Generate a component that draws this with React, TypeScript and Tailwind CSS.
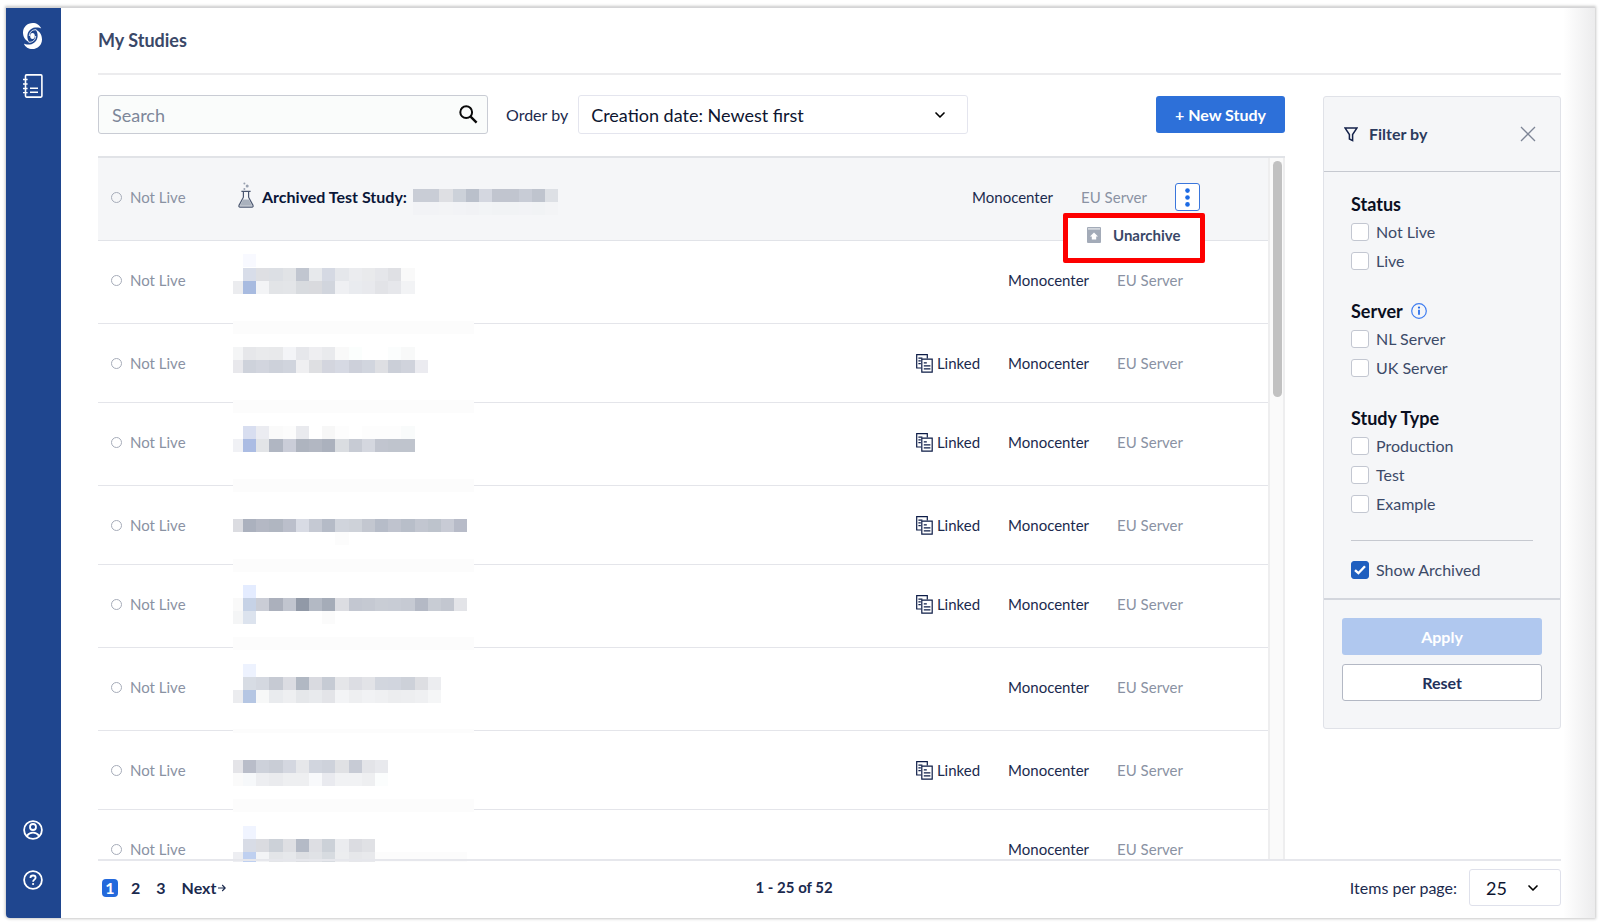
import { useState } from "react";
import { ChevronDown } from "lucide-react";

type Band = { y: number; col?: number; cells: string[] };

type Study = {
  id: number;
  tall?: boolean;
  linked?: boolean;
  // faint strip that sits across the divider above the name
  smear?: { y: number; h: number };
  bands: Band[];
};

const studies: Study[] = [
  {
    id: 2,
    tall: true,
    bands: [
      { y: 13, col: 1, cells: ["#f8f9ff"] },
      { y: 27, col: 1, cells: ["#d8dde9", "#dedfe3", "#dcdfe4", "#e1e3e6", "#c1c6d0", "#e7e9ec", "#d5d9e3", "#e5e7eb", "#ebecef", "#e9eaec", "#e5e6ea", "#dfe0e4", "#f9f9f9"] },
      { y: 40, cells: ["#ebecef", "#a8bbe0", "#f3f4f6", "#e2e4e7", "#e3e5e8", "#d8dbdf", "#d9dade", "#d1d5dd", "#eff0f3", "#e9ebef", "#e8e9ed", "#e2e3e7", "#e6e7eb", "#f2f3f5"] },
    ],
  },
  {
    id: 3,
    linked: true,
    smear: { y: -3, h: 13 },
    bands: [
      { y: 23, cells: ["#f4f5f6", "#e6e7ea", "#e9eaec", "#e8e9eb", "#f3f4f7", "#e6e7eb", "#eeeef1", "#e9eaed", "#f9f9f9", "#fbfefd", "#ffffff", "#ffffff", "#fbfdfd", "#f8f9f9"] },
      { y: 36, cells: ["#e8e8ec", "#ced2db", "#d2d5de", "#cdd1da", "#d0d4dd", "#efeff1", "#dedfe2", "#d3d5de", "#d6d9e3", "#cdd0da", "#d1d5de", "#dedfe3", "#cbcfd8", "#d0d3dc", "#ebebf0"] },
    ],
  },
  {
    id: 4,
    tall: true,
    linked: true,
    smear: { y: -3, h: 13 },
    bands: [
      { y: 23, col: 1, cells: ["#d8def0", "#ebecf1", "#fafafa", "#fcfcfc", "#e9eaee", "#ffffff", "#f7f7f7", "#fdfdfd", "#ffffff", "#fdfdfd", "#fdfdfd", "#fdfdfd", "#f9fbfb"] },
      { y: 36, cells: ["#f0f1f5", "#abbce3", "#e2e4e7", "#b0b6c2", "#cacdd8", "#aeb4bf", "#b2b7c2", "#abb1bd", "#dadde1", "#c7cbd4", "#d4d7df", "#c1c5cf", "#bfc4cd", "#bfc4cd"] },
    ],
  },
  {
    id: 5,
    linked: true,
    smear: { y: -7, h: 13 },
    bands: [
      { y: 33, cells: ["#dbdce1", "#abb1be", "#b4b8c4", "#b0b6c1", "#bbbfcb", "#d8dbe4", "#c5c9d3", "#b5bbc7", "#d0d4dc", "#ced2d9", "#c3c7d0", "#b6bcc8", "#bfc3ce", "#b8bec9", "#c2c6d0", "#bdc3cc", "#c8cbd5", "#b7bbc8"] },
      { y: 46, col: 8, cells: ["#fcfcfc"] },
    ],
  },
  {
    id: 6,
    tall: true,
    linked: true,
    smear: { y: -6, h: 13 },
    bands: [
      { y: 20, col: 1, cells: ["#e4ecff"] },
      { y: 33, cells: ["#f9f9f9", "#c6d2e6", "#cacdd6", "#abb0bc", "#c1c5cf", "#9199a7", "#b3b9c4", "#a5acb8", "#dcdde2", "#c3c7d1", "#c5c9d2", "#c9cdd5", "#c8ccd5", "#c6cad3", "#b4b9c5", "#c8ccd4", "#c3c7d0", "#e3e4e8"] },
      { y: 46, cells: ["#f4f5f6", "#dce3ee"] },
      { y: 46, col: 7, cells: ["#fbfbfb"] },
    ],
  },
  {
    id: 7,
    tall: true,
    smear: { y: -11, h: 13 },
    bands: [
      { y: 16, col: 1, cells: ["#edf2fe"] },
      { y: 29, col: 1, cells: ["#d7dce4", "#d4d8e0", "#c6cad3", "#dbdce2", "#b1b8c3", "#d9dae0", "#c6cbd4", "#e5e6e9", "#dcdde3", "#e2e3e7", "#d2d6de", "#d1d5de", "#cdd1d9", "#dddee2", "#ecedf0"] },
      { y: 42, cells: ["#ebecef", "#b5c6e3", "#f7f8f8", "#e9ebee", "#eeeff1", "#e5e7ea", "#e8eaed", "#e3e4e8", "#f3f4f6", "#eeeff1", "#f1f2f4", "#eff0f2", "#ecedef", "#edeef0", "#eff0f2", "#f5f6f7"] },
    ],
  },
  {
    id: 8,
    linked: true,
    smear: { y: -2, h: 4 },
    bands: [
      { y: 29, cells: ["#e4e4e8", "#b9bdc9", "#cdd1da", "#c9cdd6", "#d4d7e0", "#e6e7ea", "#d1d5de", "#ced2db", "#e0e1e4", "#c7cbd5", "#e3e4e8", "#e8e9ed"] },
      { y: 42, cells: ["#fafafa", "#f6f8fa", "#edeef1", "#eaebee", "#eeeff1", "#eeeff1", "#f8f9fb", "#e9eaef", "#f1f2f4", "#f1f2f4", "#eeeff1", "#fbfdfd"] },
    ],
  },
  {
    id: 9,
    tall: true,
    smear: { y: -11, h: 13 },
    bands: [
      { y: 16, col: 1, cells: ["#f0f4ff"] },
      { y: 29, col: 1, cells: ["#d8dce6", "#dadbe0", "#ccd1d8", "#dedfe3", "#b4bac6", "#dddee3", "#ccd1d8", "#ebecef", "#dbdce1", "#e0e1e5"] },
      { y: 42, cells: ["#edeef2", "#bfd0f0", "#f3f4f6", "#e3e5e8", "#e6e8eb", "#dddfe3", "#e0e2e6", "#d7dbe0", "#ecedef", "#e6e7ea", "#e8e9ec", "#fcfcfc", "#fcfcfc", "#fcfcfc", "#fcfcfc", "#fcfcfc", "#fcfcfc", "#fcfcfc"] },
    ],
  },
];

function colX(n: number) {
  return n === 0 ? 0 : 10 + (n - 1) * 13.2;
}

function Mosaic({ study }: { study: Study }) {
  return (
    <svg className="block h-[39px] w-[241px] self-start overflow-visible" shapeRendering="crispEdges" aria-hidden="true">
      {study.smear && <rect x="0" y={study.smear.y} width="241" height={study.smear.h} fill="#fcfcfc" />}
      {study.bands.map((band) =>
        band.cells.map((fill, i) => {
          const n = i + (band.col ?? 0);
          return (
            <rect key={`${band.y}-${n}`} x={colX(n)} y={band.y} width={colX(n + 1) - colX(n)} height="13" fill={fill} />
          );
        })
      )}
    </svg>
  );
}

function LogoIcon() {
  const arm = "M18.2 5.6C16.8 2 13.4 0 9.8 0C4.2 0 0 4.2 0 9.6C0 14 2 17.4 6.6 19.4C4.8 17.4 4.2 15 4.4 12.6C4.8 8.4 7.8 5.2 12 4.6C14.2 4.3 16.6 4.5 18.2 5.6Z";
  return (
    <svg width="19" height="26" viewBox="0 0 19 26" fill="none" aria-hidden="true">
      <path d={arm} fill="white" />
      <path d={arm} fill="white" transform="rotate(180 9.5 13)" />
      <path d="M13.4 6.8C9.4 6.4 6.4 9 6.3 13" stroke="white" strokeWidth="0.9" />
      <path d="M5.6 19.2C9.6 19.6 12.6 17 12.7 13" stroke="white" strokeWidth="0.9" />
      <ellipse cx="9.5" cy="13" rx="2.3" ry="3" fill="white" />
    </svg>
  );
}

function NotebookIcon() {
  return (
    <svg width="20" height="24" viewBox="0 0 20 24" fill="none" stroke="white" aria-hidden="true">
      <rect x="2.5" y="0.9" width="16.4" height="22.2" rx="1" strokeWidth="1.6" />
      <path d="M0 5.5h4.6M0 10h4.6M0 14.5h4.6M0 18.6h4.6" strokeWidth="1.4" />
      <path d="M7 14.2h8M7 18.2h8" strokeWidth="1.5" />
    </svg>
  );
}

function AccountIcon() {
  return (
    <svg width="20" height="20" viewBox="0 0 20 20" fill="none" stroke="white" strokeWidth="1.8" aria-hidden="true">
      <circle cx="10" cy="10" r="8.9" />
      <circle cx="10" cy="7" r="3" />
      <path d="M4 15.8C5.4 13.6 7.4 12.6 10 12.6s4.6 1 6 3.2" />
    </svg>
  );
}

function HelpIcon() {
  return (
    <svg width="20" height="20" viewBox="0 0 20 20" fill="none" stroke="white" strokeWidth="1.8" aria-hidden="true">
      <circle cx="10" cy="10" r="8.9" />
      <path d="M7.4 8c0-1.5 1.1-2.5 2.6-2.5s2.6.9 2.6 2.3c0 1.8-2.5 1.9-2.5 3.9" />
      <circle cx="10.1" cy="14" r="1.1" fill="white" stroke="none" />
    </svg>
  );
}

function SearchIcon() {
  return (
    <svg width="19" height="19" viewBox="0 0 19 19" fill="none" stroke="#0a0a0a" aria-hidden="true">
      <circle cx="7.2" cy="7.2" r="5.9" strokeWidth="2" />
      <path d="M11.6 11.6L17.6 17.6" strokeWidth="2.4" />
    </svg>
  );
}

function FlaskIcon() {
  return (
    <svg width="16" height="26" viewBox="0 0 16 26" fill="none" aria-hidden="true">
      <circle cx="6.4" cy="1.4" r="1" fill="#9aa2b1" />
      <circle cx="9.2" cy="4" r="1.5" fill="#9aa2b1" />
      <circle cx="6.4" cy="7" r="1" fill="#9aa2b1" />
      <path d="M5.2 17.6h5.6l3.4 6.2H1.8z" fill="#a9b1bd" />
      <path d="M3.4 9.4h9.2M5.4 9.6v5.6L1 23.4c-.4.8 0 1.7 1 1.7h12c1 0 1.4-.9 1-1.7l-4.4-8.2V9.6" stroke="#4b5770" strokeWidth="1.2" />
    </svg>
  );
}

function LinkedIcon() {
  return (
    <svg width="17" height="19" viewBox="0 0 17 19" fill="none" stroke="#0d1c47" strokeWidth="1.2" aria-hidden="true">
      <path d="M5.2 14H.7V.7h10.6v3.8" />
      <path d="M2.4 4.2h4M2.4 6.9h2.4M2.4 9.6h2.4" />
      <path d="M5.8 5.2h10.4v13H5.8z" />
      <path d="M7.8 8.8h3M7.8 11.8h6.6M7.8 14.8h6.6" />
    </svg>
  );
}

function UnarchiveIcon() {
  return (
    <svg width="14" height="16" viewBox="0 0 14 16" aria-hidden="true">
      <rect width="14" height="16" rx="1" fill="#a3abb8" />
      <rect x="1" y="1.2" width="12" height="1.4" fill="#dfe2e7" />
      <path d="M7 5.6l4 4H9.2v2.8H4.8V9.6H3z" fill="white" />
    </svg>
  );
}

function StatusCell() {
  return (
    <div className="flex w-[135px] shrink-0 items-center gap-2 pl-[13px] text-[#8a92a3]">
      <span className="size-[11px] rounded-full border border-[#a6acb9]" />
      Not Live
    </div>
  );
}

function FilterOption({ label, checked = false }: { label: string; checked?: boolean }) {
  const [on, setOn] = useState(checked);
  return (
    <label className="flex h-[29px] items-center gap-[7px] text-base text-[#3c4a68]">
      <span className="grid size-[18px] place-items-center">
        <input
          type="checkbox"
          checked={on}
          onChange={(e) => setOn(e.target.checked)}
          className="peer col-start-1 row-start-1 size-[18px] appearance-none rounded-[3px] border border-[#c3c7d1] bg-white checked:border-[#1f5fbf] checked:bg-[#1f5fbf]"
        />
        <svg className="pointer-events-none invisible col-start-1 row-start-1 peer-checked:visible" width="12" height="10" viewBox="0 0 12 10" fill="none" stroke="white" strokeWidth="2.4" aria-hidden="true">
          <path d="M1 5.2l3.4 3L11 1.2" />
        </svg>
      </span>
      {label}
    </label>
  );
}

export default function App() {
  return (
    <div className="h-screen overflow-hidden bg-white pt-[7px] pr-[5px] pb-[6px] pl-[6px] font-['Lato',sans-serif] text-[15px] text-[#1b2a4e]">
      <div className="flex h-full overflow-hidden rounded-bl-sm border-t border-[#d4d4d6] shadow-[0_0_3px_1px_rgba(0,0,0,0.22)]">
        {/* Sidebar */}
        <nav className="flex w-[55px] shrink-0 flex-col items-center bg-[#1f468f] pt-[15px] pr-0.5 pb-[28px]">
          <a href="#home" aria-label="Home">
            <LogoIcon />
          </a>
          <a href="#studies" aria-label="Studies" className="mt-[25px]">
            <NotebookIcon />
          </a>
          <a href="#account" aria-label="Account" className="mt-auto">
            <AccountIcon />
          </a>
          <a href="#help" aria-label="Help" className="mt-[30px]">
            <HelpIcon />
          </a>
        </nav>

        <div className="flex min-w-0 flex-1 bg-linear-to-l from-[#ececed] via-white via-[32px] to-white">
          <main className="flex min-w-0 flex-1 flex-col pr-[34px] pl-[37px]">
            <h1 className="border-b-2 border-[#ececee] pt-5 pb-[21px] text-lg leading-6 font-bold text-[#3a4868]">My Studies</h1>

            <div className="flex min-h-0 flex-1 gap-[38px]">
              <div className="flex min-w-0 flex-1 flex-col">
                {/* Toolbar */}
                <div className="flex items-center pt-5 pb-[22px]">
                  <div className="flex h-[39px] w-[390px] items-center rounded-[3px] border border-[#c9ccd4] bg-[#fafcfb] pr-[9px] pl-[13px]">
                    <input type="search" aria-label="Search" placeholder="Search" className="min-w-0 flex-1 text-lg outline-none placeholder:text-[#7d8799]" />
                    <button aria-label="Run search">
                      <SearchIcon />
                    </button>
                  </div>
                  <label htmlFor="order" className="mr-[10px] ml-[18px] text-base">Order by</label>
                  <div className="grid w-[390px] items-center">
                    <select id="order" className="col-start-1 row-start-1 h-[39px] appearance-none rounded-[3px] border border-[#e4e5ee] bg-white px-3 text-lg text-[#0d1530]">
                      <option>Creation date: Newest first</option>
                    </select>
                    <ChevronDown className="pointer-events-none col-start-1 row-start-1 mr-5 size-4 justify-self-end text-black" strokeWidth={2.5} />
                  </div>
                  <button className="ml-auto h-[37px] rounded-[3px] bg-[#2d70d9] px-[19px] text-base font-bold text-white">+ New Study</button>
                </div>

                {/* Study list, the last name runs over the footer line */}
                <div className="flex min-h-0 flex-1 overflow-clip border-t-2 border-[#e1e3e7] [overflow-clip-margin:3px]">
                  <ul className="min-w-0 flex-1">
                    <li className="flex h-[83px] items-center border-b border-[#e1e3e8] bg-[#f5f6f8] pb-1">
                      <StatusCell />
                      <div className="flex items-center pl-[5px]">
                        <span className="-mt-1">
                          <FlaskIcon />
                        </span>
                        <a href="#study" className="ml-2 text-base font-bold text-[#0b1638]">Archived Test Study:</a>
                        <svg className="ml-[6px] h-4 w-[146px] overflow-visible" shapeRendering="crispEdges" aria-hidden="true">
                          {["#c9cdd6", "#c9cdd6", "#dedfe3", "#ccd1d9", "#bac0cb", "#d4d7e0", "#c1c5cf", "#c1c5cf", "#c8ccd6", "#bfc4ce", "#dde0e5"].map((fill, i) => (
                            <g key={i} fill={fill}>
                              <rect x={i * 13.2} width="13.2" height="13" />
                              <rect x={i * 13.2} y="13" width="13.2" height="13" opacity="0.06" />
                            </g>
                          ))}
                        </svg>
                      </div>
                      <div className="ml-auto flex items-center gap-7 pr-[68px]">
                        <span>Monocenter</span>
                        <span className="text-[#8a92a3]">EU Server</span>
                        <div className="relative">
                          <button aria-label="Study actions" aria-haspopup="menu" className="flex h-[28px] w-[25px] items-center justify-center rounded-[3px] border border-[#3a76dc] bg-white">
                            <svg width="5" height="19" viewBox="0 0 5 19" fill="#1c6ae4" aria-hidden="true">
                              <circle cx="2.5" cy="2.6" r="2.3" />
                              <circle cx="2.5" cy="9.5" r="2.3" />
                              <circle cx="2.5" cy="16.4" r="2.3" />
                            </svg>
                          </button>
                          <div role="menu" className="absolute top-[30px] -right-[5px] z-10 rounded-[2px] border-[5px] border-[#fd0000] bg-white">
                            <button role="menuitem" className="flex h-[40px] w-[132px] items-center gap-3 pb-[6px] pl-[19px] font-bold text-[#3a4868]">
                              <UnarchiveIcon />
                              Unarchive
                            </button>
                          </div>
                        </div>
                      </div>
                    </li>
                    {studies.map((study) => (
                      <li key={study.id} className={`flex items-center border-b border-[#e4e5ea] ${study.tall ? "h-[83px] pb-1" : "h-[79px]"}`}>
                        <StatusCell />
                        <Mosaic study={study} />
                        <div className="ml-auto flex items-center gap-7 pr-[85px]">
                          {study.linked && (
                            <span className="flex items-center gap-1">
                              <LinkedIcon />
                              Linked
                            </span>
                          )}
                          <span>Monocenter</span>
                          <span className="text-[#8a92a3]">EU Server</span>
                        </div>
                      </li>
                    ))}
                  </ul>
                  <div className="w-[17px] shrink-0 border-x-2 border-[#eeeeef] bg-[#fafafa] pt-[3px] pr-px pl-[3px]">
                    <div className="h-[236px] rounded-full bg-[#c1c1c1]" />
                  </div>
                </div>
              </div>

              {/* Filters */}
              <aside className="mt-[21px] w-[238px] shrink-0 self-start rounded-[3px] border border-[#e0e2e8] bg-[#f5f6f8]">
                <div className="flex h-[75px] items-center border-b border-[#c6c9d0] pr-[24px] pl-5">
                  <svg width="14" height="15" viewBox="0 0 14 15" fill="none" stroke="#14224a" strokeWidth="1.5" aria-hidden="true">
                    <path d="M1 1h12L8.6 7.6v6L5.4 12V7.6z" />
                  </svg>
                  <h2 className="ml-[11px] text-base font-bold text-[#2c3b5e]">Filter by</h2>
                  <button aria-label="Close filters" className="ml-auto">
                    <svg width="16" height="16" viewBox="0 0 16 16" stroke="#7d8596" strokeWidth="1.3" aria-hidden="true">
                      <path d="M1 1l14 14M15 1L1 15" />
                    </svg>
                  </button>
                </div>
                <div className="px-[27px] pt-[19px] pb-[14px]">
                  <fieldset>
                    <legend className="text-lg leading-[26px] font-bold text-[#0a0f1f]">Status</legend>
                    <FilterOption label="Not Live" />
                    <FilterOption label="Live" />
                  </fieldset>
                  <fieldset className="mt-[23px]">
                    <legend className="flex items-center gap-2 text-lg leading-[26px] font-bold text-[#0a0f1f]">
                      Server
                      <svg width="16" height="16" viewBox="0 0 16 16" fill="none" aria-hidden="true">
                        <circle cx="8" cy="8" r="7.3" stroke="#3f7df0" strokeWidth="1.2" />
                        <path d="M8 6.8v5" stroke="#1f68ea" strokeWidth="1.7" />
                        <circle cx="8" cy="4.6" r="1.1" fill="#1f68ea" />
                      </svg>
                    </legend>
                    <FilterOption label="NL Server" />
                    <FilterOption label="UK Server" />
                  </fieldset>
                  <fieldset className="mt-[23px]">
                    <legend className="text-lg leading-[26px] font-bold text-[#0a0f1f]">Study Type</legend>
                    <FilterOption label="Production" />
                    <FilterOption label="Test" />
                    <FilterOption label="Example" />
                  </fieldset>
                  <hr className="mt-[22px] mb-[14px] border-[#c6c9d0]" />
                  <FilterOption label="Show Archived" checked />
                </div>
                <div className="flex flex-col gap-[9px] border-t-2 border-[#d3d6dd] px-[18px] pt-[18px] pb-[27px]">
                  <button className="h-[37px] rounded-[3px] bg-[#b0c8ef] text-base font-bold text-white">Apply</button>
                  <button className="h-[37px] rounded-[3px] border border-[#b3b8c4] bg-white text-base font-bold text-[#22315a]">Reset</button>
                </div>
              </aside>
            </div>

            {/* Footer */}
            <footer className="flex h-[59px] shrink-0 items-center justify-between border-t-2 border-[#e6e7ec] pb-1 text-base font-bold">
              <nav aria-label="Pages" className="flex items-center pr-3 pl-1">
                <a href="#1" aria-current="page" className="flex h-[18px] w-4 items-center justify-center rounded-[4px] bg-[#2369dc] text-white">1</a>
                <a href="#2" className="ml-[13px]">2</a>
                <a href="#3" className="ml-4">3</a>
                <a href="#next" className="ml-4 flex items-center gap-[2px]">
                  Next
                  <svg width="8" height="8" viewBox="0 0 8 8" fill="none" stroke="#1b2a4e" strokeWidth="1.1" aria-hidden="true">
                    <path d="M0 4h7M4.2 1L7.2 4l-3 3" />
                  </svg>
                </a>
              </nav>
              <p className="text-[15px]">1 - 25 of 52</p>
              <div className="flex items-center gap-3">
                <label htmlFor="per-page" className="font-normal">Items per page:</label>
                <div className="grid w-[92px] items-center">
                  <select id="per-page" className="col-start-1 row-start-1 h-[37px] appearance-none rounded-[3px] border border-[#dfe1eb] bg-white pl-4 text-lg font-normal text-[#0d1530]">
                    <option>25</option>
                  </select>
                  <ChevronDown className="pointer-events-none col-start-1 row-start-1 mr-5 size-4 justify-self-end text-black" strokeWidth={2.5} />
                </div>
              </div>
            </footer>
          </main>
        </div>
      </div>
    </div>
  );
}
